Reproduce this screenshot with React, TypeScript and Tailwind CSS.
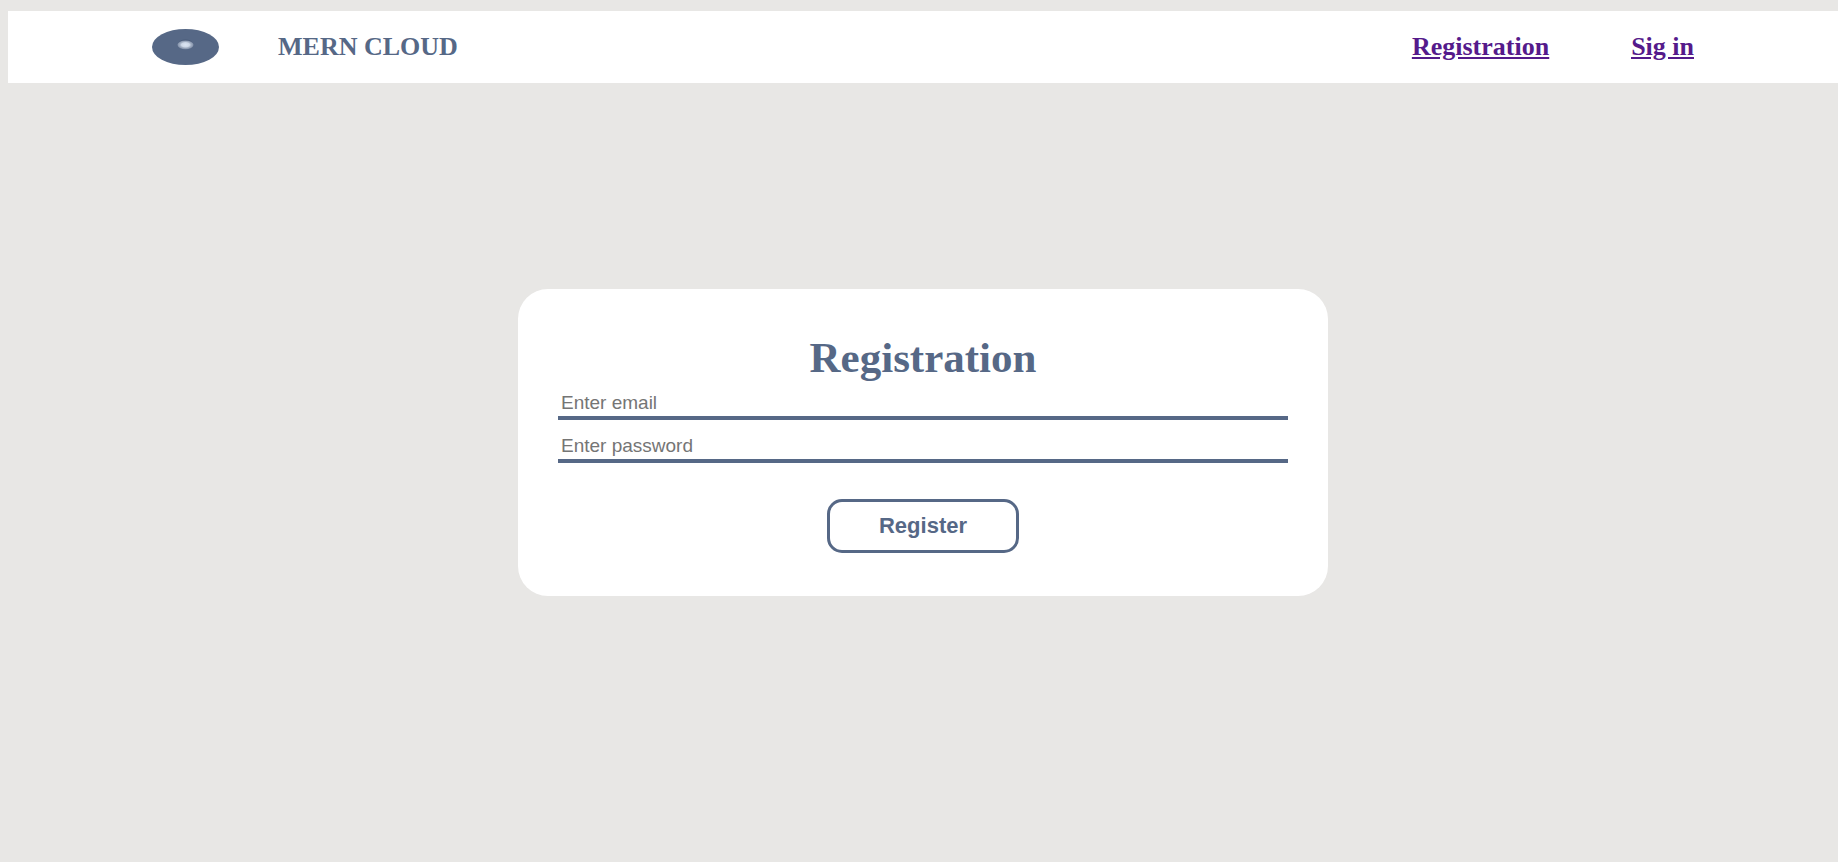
import { useState } from "react";

function Logo() {
  return (
    <svg viewBox="0 0 67 36" className="h-9 w-[67px]" role="img" aria-label="Mern Cloud logo">
      <defs>
        <radialGradient id="lens" cx="50%" cy="50%" r="50%">
          <stop offset="0%" stopColor="#dce6f4" />
          <stop offset="50%" stopColor="#cdd7e6" />
          <stop offset="70%" stopColor="#a3b0c4" />
          <stop offset="100%" stopColor="#8290a8" />
        </radialGradient>
      </defs>
      <ellipse cx="33.5" cy="18" rx="33.5" ry="18" fill="#566886" />
      <ellipse cx="33.5" cy="14.5" rx="7" ry="4" fill="#4a5b78" />
      <ellipse cx="33.5" cy="15.8" rx="8" ry="4.4" fill="url(#lens)" />
    </svg>
  );
}

function Navbar() {
  return (
    <header className="bg-white">
      <div className="mx-auto flex min-h-[72px] max-w-[1542px] flex-wrap items-center justify-between gap-x-10 text-[26px] leading-[30px] font-bold">
        <div className="flex items-center gap-[59px]">
          <Logo />
          <span>MERN CLOUD</span>
        </div>
        <nav className="flex gap-[82px] text-[#551a8b] underline">
          <a href="#registration">Registration</a>
          <a href="#login">Sig in</a>
        </nav>
      </div>
    </header>
  );
}

type FieldProps = {
  type: string;
  label: string;
  value: string;
  onChange: (value: string) => void;
};

function Field({ type, label, value, onChange }: FieldProps) {
  return (
    <input
      type={type}
      aria-label={label}
      placeholder={label}
      value={value}
      onChange={(event) => onChange(event.target.value)}
      className="w-full border-b-4 border-[#566886] px-[3px] py-0.5 font-['Liberation_Sans',Arial,sans-serif] text-[19px] leading-[22px] outline-none placeholder:text-[#757575]"
    />
  );
}

function Registration() {
  const [email, setEmail] = useState("");
  const [password, setPassword] = useState("");

  return (
    <form
      onSubmit={(event) => event.preventDefault()}
      className="mx-auto mt-[206px] flex w-full max-w-[810px] flex-col items-center rounded-[30px] bg-white px-10 pt-[45px] pb-[43px]"
    >
      <h1 className="mb-2 text-[43px] leading-[48px] font-bold">Registration</h1>
      <div className="flex w-full flex-col gap-[13px]">
        <Field type="email" label="Enter email" value={email} onChange={setEmail} />
        <Field type="password" label="Enter password" value={password} onChange={setPassword} />
      </div>
      <button
        type="submit"
        className="mt-9 h-[54px] w-48 cursor-pointer rounded-[15px] border-3 border-[#566886] font-['Liberation_Sans',Arial,sans-serif] text-[22px] leading-6 font-bold"
      >
        Register
      </button>
    </form>
  );
}

export default function App() {
  return (
    <div className="min-h-screen bg-[#e8e7e5] pt-[11px] pl-2 font-['Liberation_Serif','Times_New_Roman',serif] text-[#566886]">
      <Navbar />
      <main>
        <Registration />
      </main>
    </div>
  );
}
